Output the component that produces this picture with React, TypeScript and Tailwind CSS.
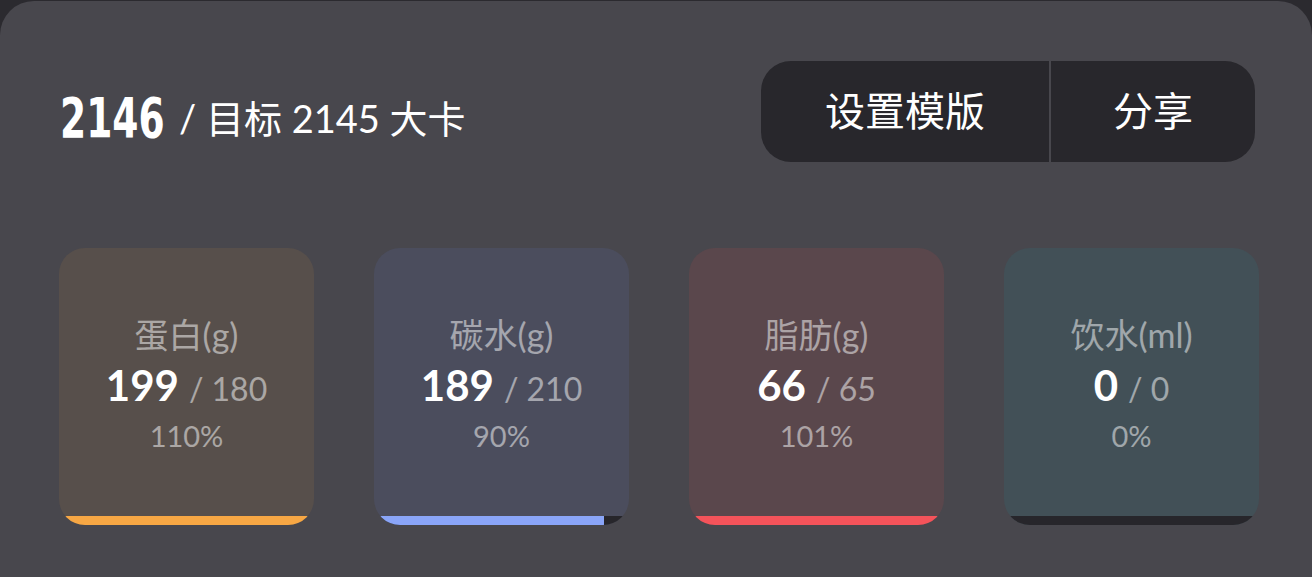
import React from "react";

const latin = "font-['Lato','Noto_Sans_CJK_SC',sans-serif]";

type Item = {
  label: string;
  value: string;
  target: string;
  pct: string;
  bg: string;
  bar: string;
  fill: number;
};

const items: Item[] = [
  { label: "蛋白(g)", value: "199", target: "180", pct: "110%", bg: "bg-[#574f4b]", bar: "bg-[#f7a744]", fill: 100 },
  { label: "碳水(g)", value: "189", target: "210", pct: "90%", bg: "bg-[#4b4d5d]", bar: "bg-[#8aa5f8]", fill: 90 },
  { label: "脂肪(g)", value: "66", target: "65", pct: "101%", bg: "bg-[#5a474c]", bar: "bg-[#f4535a]", fill: 100 },
  { label: "饮水(ml)", value: "0", target: "0", pct: "0%", bg: "bg-[#425057]", bar: "bg-[#8fc7e0]", fill: 0 },
];

function Card({ it }: { it: Item }) {
  return (
    <div className={`relative flex h-[277px] flex-col overflow-hidden rounded-[26px] ${it.bg}`}>
      <div className="flex flex-1 flex-col items-center justify-center pt-[7px]">
        <div className={`${latin} text-[34px] leading-[40px] text-white/50`}>{it.label}</div>
        <div className={`${latin} mt-[8px] flex items-baseline leading-[44px]`}>
          <span className="text-[42px] font-bold text-white">{it.value}</span>
          <span className="ml-[10px] text-[32px] text-white/50">/ {it.target}</span>
        </div>
        <div className={`${latin} mt-[5px] text-[29px] leading-[40px] text-white/50`}>{it.pct}</div>
      </div>
      <div className="flex h-[9px] w-full bg-[#27262b]">
        <div className={`h-full ${it.bar}`} style={{ width: `${it.fill}%` }} />
      </div>
    </div>
  );
}

export default function App() {
  return (
    <div className="h-[577px] w-[1312px] overflow-hidden bg-[#2b2a2f] pt-[1px]">
      <div className="h-[620px] rounded-[34px] bg-[#48474d] pl-[59px] pr-[57px] pt-[60px]">
        <div className="flex h-[101px] items-center justify-between">
          <div className="flex items-center pl-[1px] pt-[12px] text-white">
            <span className="inline-block w-[106px]">
              <span className="inline-block origin-left scale-x-[0.76] font-['DejaVu_Sans',sans-serif] text-[55px] font-bold leading-[60px] [font-stretch:condensed]">
                2146
              </span>
            </span>
            <span className={`${latin} ml-[13px] text-[38px] leading-[50px]`}>/ 目标 2145 大卡</span>
          </div>
          <div className="flex h-[101px] gap-[2px]">
            <div className="flex w-[288px] items-center justify-center rounded-l-[30px] bg-[#28272c] pb-[6px] font-['Noto_Sans_CJK_SC',sans-serif] text-[40px] text-white">
              设置模版
            </div>
            <div className="flex w-[204px] items-center justify-center rounded-r-[30px] bg-[#28272c] pb-[6px] font-['Noto_Sans_CJK_SC',sans-serif] text-[40px] text-white">
              分享
            </div>
          </div>
        </div>
        <div className="mt-[86px] grid w-[1200px] grid-cols-4 gap-x-[60px]">
          {items.map((it) => (
            <Card key={it.label} it={it} />
          ))}
        </div>
      </div>
    </div>
  );
}
